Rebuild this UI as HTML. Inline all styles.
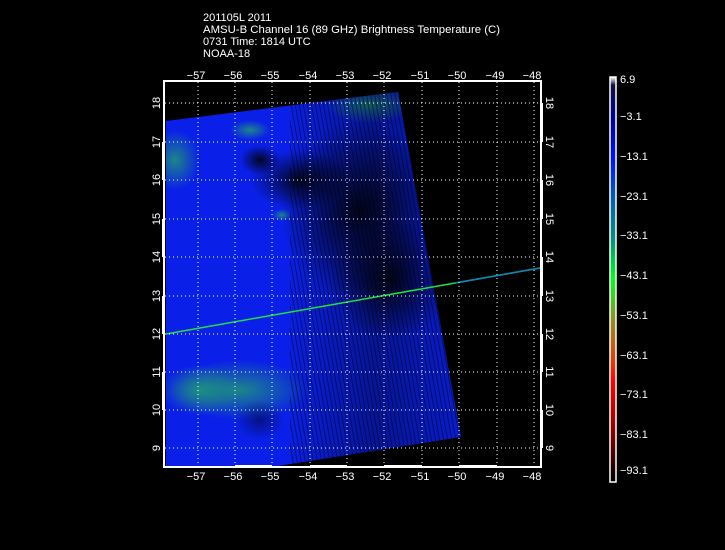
<!DOCTYPE html>
<html><head><style>
html,body{margin:0;padding:0;background:#000;width:725px;height:550px;overflow:hidden}
svg{display:block}
text{font-family:"Liberation Sans",sans-serif;fill:#fff;font-size:11px}
</style></head><body>
<svg width="725" height="550" viewBox="0 0 725 550" xmlns="http://www.w3.org/2000/svg">
<defs>
<linearGradient id="cb" x1="0" y1="0" x2="0" y2="1">
<stop offset="0" stop-color="#fff"/><stop offset="0.02" stop-color="#101040"/>
<stop offset="0.1" stop-color="#000090"/><stop offset="0.2" stop-color="#0010ff"/>
<stop offset="0.3" stop-color="#0060b0"/><stop offset="0.4" stop-color="#009080"/>
<stop offset="0.5" stop-color="#00ff20"/><stop offset="0.6" stop-color="#909020"/>
<stop offset="0.7" stop-color="#e04000"/><stop offset="0.75" stop-color="#ff0000"/>
<stop offset="0.87" stop-color="#900000"/><stop offset="0.98" stop-color="#100000"/>
<stop offset="1" stop-color="#000"/>
</linearGradient>
<radialGradient id="dk" cx="0.5" cy="0.5" r="0.5"><stop offset="0" stop-color="#000" stop-opacity="0.85"/><stop offset="1" stop-color="#000" stop-opacity="0"/></radialGradient>
<radialGradient id="gr" cx="0.5" cy="0.5" r="0.5"><stop offset="0" stop-color="#20a070" stop-opacity="0.8"/><stop offset="1" stop-color="#20a070" stop-opacity="0"/></radialGradient>
<linearGradient id="fade" x1="0" y1="0" x2="1" y2="0"><stop offset="0.4" stop-color="#000" stop-opacity="0"/><stop offset="0.7" stop-color="#000" stop-opacity="0.35"/><stop offset="1" stop-color="#000" stop-opacity="0.1"/></linearGradient>
<pattern id="hatch" width="4" height="4" patternUnits="userSpaceOnUse" patternTransform="rotate(-10)"><rect width="1" height="4" fill="#000" opacity="0.45"/></pattern>
<clipPath id="sw"><polygon points="166,121 398,92 461,437 272,467 166,467"/></clipPath>
</defs>
<text x="203" y="21">201105L 2011</text>
<text x="203" y="33" textLength="297" lengthAdjust="spacingAndGlyphs">AMSU-B Channel 16 (89 GHz) Brightness Temperature (C)</text>
<text x="203" y="45">0731 Time: 1814 UTC</text>
<text x="203" y="57">NOAA-18</text>
<g clip-path="url(#sw)">
<rect x="166" y="80" width="300" height="390" fill="#0a20e8"/>
<ellipse cx="370" cy="105" rx="45" ry="18" fill="url(#gr)"/>
<ellipse cx="175" cy="160" rx="25" ry="30" fill="url(#gr)"/>
<ellipse cx="250" cy="130" rx="20" ry="10" fill="url(#gr)"/>
<ellipse cx="240" cy="390" rx="70" ry="30" fill="url(#gr)"/>
<ellipse cx="200" cy="390" rx="40" ry="25" fill="url(#gr)"/>
<ellipse cx="282" cy="215" rx="10" ry="6" fill="url(#gr)"/>
<ellipse cx="360" cy="210" rx="80" ry="90" fill="url(#dk)"/>
<ellipse cx="300" cy="180" rx="50" ry="30" fill="url(#dk)"/>
<ellipse cx="390" cy="280" rx="60" ry="60" fill="url(#dk)"/>
<ellipse cx="260" cy="160" rx="20" ry="15" fill="url(#dk)"/>
<ellipse cx="260" cy="420" rx="25" ry="20" fill="url(#dk)" opacity="0.5"/>
<rect x="166" y="80" width="300" height="390" fill="url(#fade)"/>
<rect x="290" y="80" width="180" height="390" fill="url(#hatch)"/>
</g>
<line x1="166" y1="334" x2="540" y2="268" stroke="#20e040" stroke-width="1.5"/>
<line x1="455" y1="283" x2="540" y2="268" stroke="#1080c0" stroke-width="1.5"/>
<g stroke="#fff" stroke-width="1" stroke-dasharray="1,3">
<line x1="198" y1="82" x2="198" y2="466"/><line x1="235" y1="82" x2="235" y2="466"/>
<line x1="272" y1="82" x2="272" y2="466"/><line x1="310" y1="82" x2="310" y2="466"/>
<line x1="347" y1="82" x2="347" y2="466"/><line x1="384" y1="82" x2="384" y2="466"/>
<line x1="422" y1="82" x2="422" y2="466"/><line x1="459" y1="82" x2="459" y2="466"/>
<line x1="497" y1="82" x2="497" y2="466"/><line x1="534" y1="82" x2="534" y2="466"/>
<line x1="165" y1="103" x2="540" y2="103"/><line x1="165" y1="142" x2="540" y2="142"/>
<line x1="165" y1="180" x2="540" y2="180"/><line x1="165" y1="219" x2="540" y2="219"/>
<line x1="165" y1="257" x2="540" y2="257"/><line x1="165" y1="296" x2="540" y2="296"/>
<line x1="165" y1="334" x2="540" y2="334"/><line x1="165" y1="372" x2="540" y2="372"/>
<line x1="165" y1="410" x2="540" y2="410"/><line x1="165" y1="448" x2="540" y2="448"/>
</g>
<rect x="164" y="81" width="377" height="386" fill="none" stroke="#fff" stroke-width="2"/>
<g fill="#fff">
<rect x="235" y="465" width="37" height="3"/><rect x="310" y="465" width="37" height="3"/><rect x="384" y="465" width="38" height="3"/><rect x="459" y="465" width="38" height="3"/>
<rect x="162" y="142" width="3" height="38"/><rect x="162" y="219" width="3" height="38"/><rect x="162" y="296" width="3" height="38"/><rect x="162" y="372" width="3" height="38"/>
<rect x="540" y="103" width="3" height="39"/><rect x="540" y="180" width="3" height="39"/><rect x="540" y="257" width="3" height="39"/><rect x="540" y="334" width="3" height="38"/><rect x="540" y="410" width="3" height="38"/>
</g>
<g text-anchor="middle">
<text x="196" y="79">−57</text><text x="233" y="79">−56</text><text x="270" y="79">−55</text><text x="308" y="79">−54</text><text x="345" y="79">−53</text><text x="382" y="79">−52</text><text x="420" y="79">−51</text><text x="457" y="79">−50</text><text x="495" y="79">−49</text><text x="532" y="79">−48</text>
<text x="196" y="480">−57</text><text x="233" y="480">−56</text><text x="270" y="480">−55</text><text x="308" y="480">−54</text><text x="345" y="480">−53</text><text x="382" y="480">−52</text><text x="420" y="480">−51</text><text x="457" y="480">−50</text><text x="495" y="480">−49</text><text x="532" y="480">−48</text>
</g>
<g text-anchor="middle">
<text transform="translate(160,103) rotate(-90)">18</text><text transform="translate(160,142) rotate(-90)">17</text><text transform="translate(160,180) rotate(-90)">16</text><text transform="translate(160,219) rotate(-90)">15</text><text transform="translate(160,257) rotate(-90)">14</text><text transform="translate(160,296) rotate(-90)">13</text><text transform="translate(160,334) rotate(-90)">12</text><text transform="translate(160,372) rotate(-90)">11</text><text transform="translate(160,410) rotate(-90)">10</text><text transform="translate(160,448) rotate(-90)">9</text>
<text transform="translate(546,103) rotate(90)">18</text><text transform="translate(546,142) rotate(90)">17</text><text transform="translate(546,180) rotate(90)">16</text><text transform="translate(546,219) rotate(90)">15</text><text transform="translate(546,257) rotate(90)">14</text><text transform="translate(546,296) rotate(90)">13</text><text transform="translate(546,334) rotate(90)">12</text><text transform="translate(546,372) rotate(90)">11</text><text transform="translate(546,410) rotate(90)">10</text><text transform="translate(546,448) rotate(90)">9</text>
</g>
<rect x="610" y="77" width="6" height="405" fill="url(#cb)" stroke="#fff" stroke-width="1.5"/>
<g>
<text x="620" y="83">6.9</text><text x="620" y="120">−3.1</text><text x="620" y="160">−13.1</text><text x="620" y="200">−23.1</text><text x="620" y="239">−33.1</text><text x="620" y="279">−43.1</text><text x="620" y="319">−53.1</text><text x="620" y="359">−63.1</text><text x="620" y="398">−73.1</text><text x="620" y="438">−83.1</text><text x="620" y="474">−93.1</text>
</g>
</svg>
</body></html>
